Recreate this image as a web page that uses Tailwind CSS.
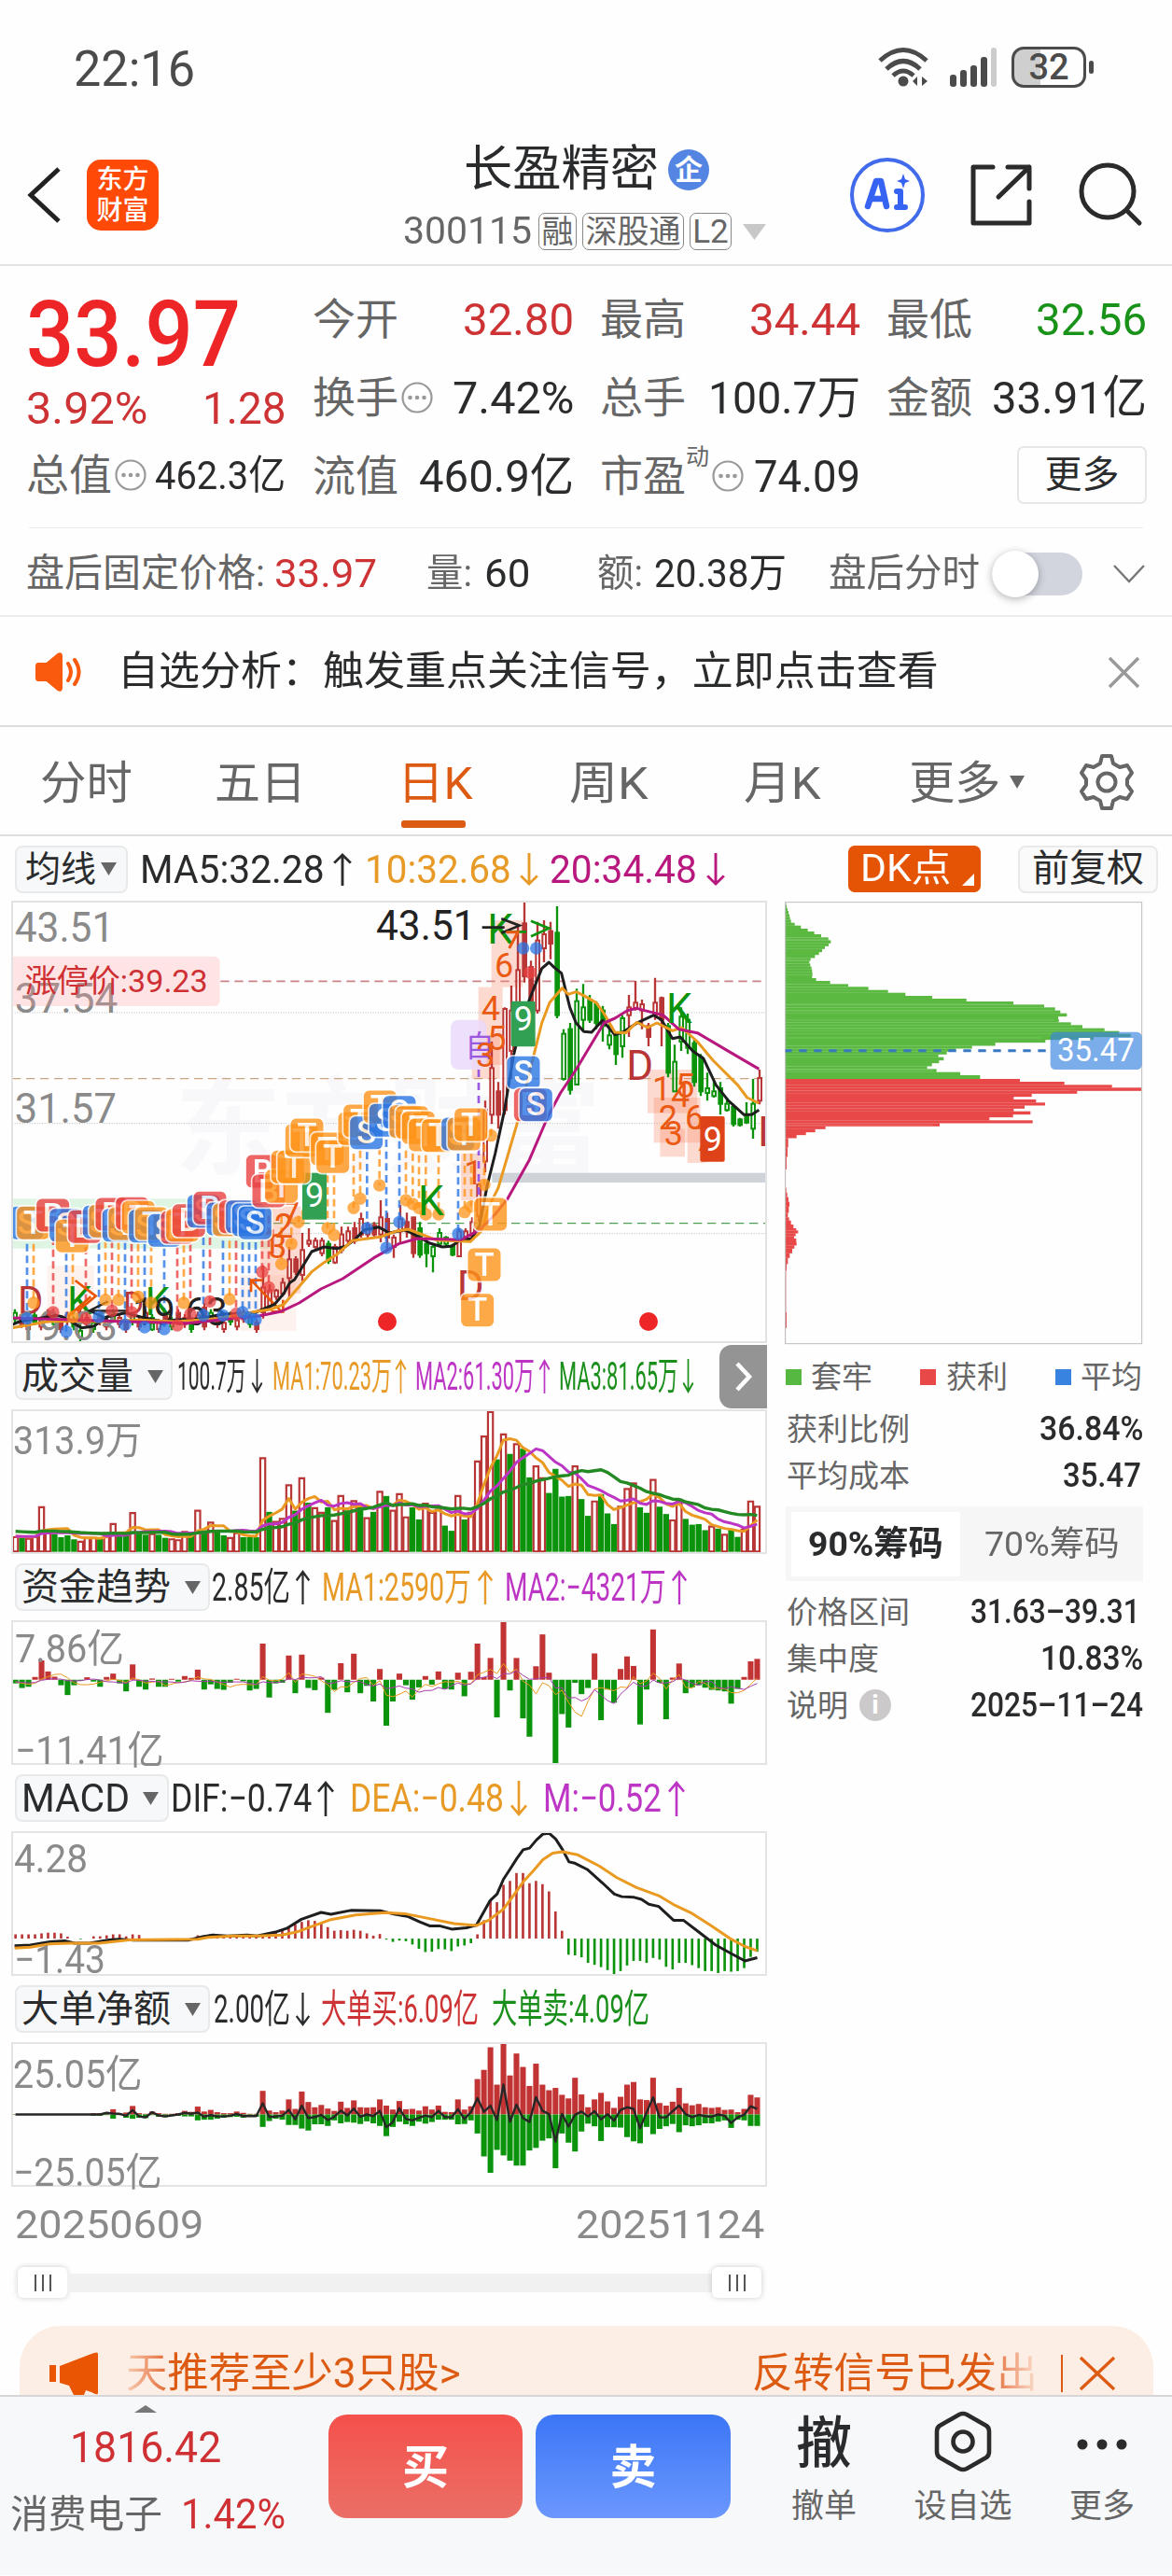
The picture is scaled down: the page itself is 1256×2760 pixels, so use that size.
<!DOCTYPE html>
<html lang="zh-CN">
<head>
  <meta charset="UTF-8">
  <title>长盈精密 300115</title>
  <script src="https://cdn.jsdelivr.net/npm/@tailwindcss/browser@4"></script>
</head>
<body class="w-[1256px] h-[2760px] overflow-hidden bg-[#fefefe] text-[#2a2b2d] font-['Roboto','Noto_Sans_CJK_SC',sans-serif] leading-none whitespace-nowrap">

  <!-- shared icons -->
  <svg class="hidden">
    <symbol id="up" viewBox="0 0 20 36" preserveAspectRatio="none"><path d="M10 36V2M2 11L10 2l8 9" fill="none" stroke="currentColor" stroke-width="2.6" /></symbol>
    <symbol id="down" viewBox="0 0 20 36" preserveAspectRatio="none"><path d="M10 0V34M2 25l8 9 8-9" fill="none" stroke="currentColor" stroke-width="2.6" /></symbol>
    <symbol id="tri" viewBox="0 0 16 14" preserveAspectRatio="none"><path d="M0 0H16L8 14z" fill="currentColor" /></symbol>
    <symbol id="more" viewBox="0 0 34 34"><circle cx="17" cy="17" r="15.5" fill="none" stroke="#999" stroke-width="2.2" /><g fill="#999"><circle cx="9.5" cy="17" r="2.3" /><circle cx="17" cy="17" r="2.3" /><circle cx="24.5" cy="17" r="2.3" /></g></symbol>
  </svg>

  <!-- status bar -->
  <div class="h-[120px] flex items-start pl-[79px] text-[#4b4b4b]">
    <span class="text-[53px] mt-[48px]" data-w="130">22:16</span>
    <svg class="ml-[731px] mt-[50px] w-[56px] h-[44px]" viewBox="0 0 56 44" fill="none" stroke="#4b4b4b" stroke-width="5">
      <path d="M3 15Q28-8 53 15" /><path d="M10 24Q28 7 46 24" /><path d="M17 31Q28 21 39 31" />
      <circle cx="28" cy="37" r="5.5" fill="#4b4b4b" stroke="none" />
      <path d="M38 37l5-5v10zM54 37l-6-5v10z" fill="#4b4b4b" stroke="none" />
    </svg>
    <svg class="ml-[20px] mt-[51px] w-[53px] h-[42px]" viewBox="0 0 53 42">
      <g fill="#4b4b4b"><rect x="2" y="29" width="7" height="13" rx="3" /><rect x="13" y="24" width="7" height="18" rx="3" /><rect x="24" y="19" width="7" height="23" rx="3" /><rect x="35" y="10" width="7" height="32" rx="3" /></g>
      <rect x="46" y="0" width="6" height="42" rx="3" fill="#ccc" />
    </svg>
    <div class="ml-[15px] mt-[50px] w-[80px] h-[44px] rounded-[13px] border-[3px] border-[#4b4b4b] bg-linear-to-r from-[#cfcfcf] from-[38%] to-transparent to-[38%] flex items-center justify-center text-[38px] font-medium">32</div>
    <div class="ml-[3px] mt-[65px] w-[5px] h-[14px] rounded-full bg-[#4b4b4b]"></div>
  </div>

  <!-- header -->
  <header class="h-[165px] border-b-2 border-[#e2e3e4] flex items-start">
    <svg class="ml-[29px] mt-[58px] w-[38px] h-[62px]" viewBox="0 0 38 62"><path d="M34 3L4 31L34 59" fill="none" stroke="#222" stroke-width="5" /></svg>
    <div class="ml-[26px] mt-[51px] w-[77px] h-[76px] rounded-[15px] bg-[#fe4a06] text-white text-[28px] font-medium flex flex-col items-center justify-center gap-[5px]"><span>东方</span><span>财富</span></div>
    <div class="ml-[262px] mt-[36px] w-[390px]">
      <div class="flex items-center pl-[65px]">
        <span class="text-[52px]" data-w="209">长盈精密</span>
        <span class="ml-[10px] size-[44px] rounded-full bg-[#5585e2] text-white text-[30px] font-bold flex items-center justify-center">企</span>
      </div>
      <div class="flex items-center mt-[19px] text-[#666] text-[40px] h-[42px]">
        <span data-w="138">300115</span>
        <span class="ml-[7px] w-[41px] h-[40px] border border-[#888] rounded-[7px] text-[34px] flex items-center justify-center">融</span>
        <span class="ml-[6px] w-[109px] h-[40px] border border-[#888] rounded-[7px] text-[34px] flex items-center justify-center">深股通</span>
        <span class="ml-[6px] w-[45px] h-[40px] border border-[#888] rounded-[7px] text-[35px] flex items-center justify-center">L2</span>
        <svg class="ml-[12px] w-[25px] h-[17px] text-[#c8c8c8]"><use href="#tri" /></svg>
      </div>
    </div>
    <svg class="ml-[88px] mt-[48px] w-[82px] h-[82px]" viewBox="0 0 82 82">
      <circle cx="41" cy="41" r="38" fill="#fff" stroke="#416bea" stroke-width="4" />
      <path d="M20 53L29 26h5l6 27M24 45h14" fill="none" stroke="#3763f2" stroke-width="6.5" stroke-linejoin="round" stroke-linecap="round" />
      <path d="M55 37v17M51 37h4M51 54h9" fill="none" stroke="#3763f2" stroke-width="6" stroke-linecap="round" />
      <path d="M58 18l2 6 5 2-5 2-2 6-2-6-5-2 5-2z" fill="#3763f2" />
    </svg>
    <svg class="ml-[46px] mt-[54px] w-[70px] h-[70px]" viewBox="0 0 70 70" fill="none" stroke="#2b2b2b" stroke-width="5" stroke-linecap="round" stroke-linejoin="round"><path d="M26 5H5V65H65V42M42 5H65V28M65 5L32 37" /></svg>
    <svg class="ml-[47px] mt-[53px] w-[70px] h-[70px]" viewBox="0 0 70 70" fill="none" stroke="#2b2b2b" stroke-width="5" stroke-linecap="round"><circle cx="32" cy="32" r="28" /><path d="M53 53L66 66" /></svg>
  </header>

  <!-- quote -->
  <section class="h-[281px] pl-[28px] pt-[29px] flex text-[46px] text-[#666]">
    <div class="w-[307px]">
      <div class="h-[96px] -mt-[3px] flex items-center font-medium text-[98px] text-[#ee2526]"><span data-w="230">33.97</span></div>
      <div class="h-[60px] flex items-center justify-between w-[279px] text-[49px] text-[#cd3335]"><span data-w="130">3.92%</span><span data-w="90">1.28</span></div>
      <div class="h-[60px] mt-[12px] flex items-center"><span>总值</span><svg class="ml-[3px] size-[34px]"><use href="#more" /></svg><span class="ml-[9px] text-[43px] text-[#2a2b2d]" data-w="140">462.3亿</span></div>
    </div>
    <div class="w-[280px]">
      <div class="h-[56px] flex items-center justify-between"><span>今开</span><span class="text-[49px] text-[#cd3335]" data-w="119">32.80</span></div>
      <div class="h-[56px] mt-[28px] flex items-center"><span>换手</span><svg class="ml-[3px] size-[34px]"><use href="#more" /></svg><span class="ml-auto text-[49px] text-[#2a2b2d]" data-w="130">7.42%</span></div>
      <div class="h-[56px] mt-[28px] flex items-center justify-between"><span>流值</span><span class="text-[49px] text-[#2a2b2d]" data-w="166">460.9亿</span></div>
    </div>
    <div class="ml-[28px] w-[279px]">
      <div class="h-[56px] flex items-center justify-between"><span>最高</span><span class="text-[49px] text-[#cd3335]" data-w="119">34.44</span></div>
      <div class="h-[56px] mt-[28px] flex items-center justify-between"><span>总手</span><span class="text-[49px] text-[#2a2b2d]" data-w="163">100.7万</span></div>
      <div class="h-[56px] mt-[28px] flex items-center"><span>市盈</span><span class="text-[25px] -mt-[42px]">动</span><svg class="ml-[3px] size-[34px]"><use href="#more" /></svg><span class="ml-auto text-[49px] text-[#2a2b2d]" data-w="114">74.09</span></div>
    </div>
    <div class="ml-[28px] w-[279px]">
      <div class="h-[56px] flex items-center justify-between"><span>最低</span><span class="text-[49px] text-[#199219]" data-w="119">32.56</span></div>
      <div class="h-[56px] mt-[28px] flex items-center justify-between"><span>金额</span><span class="text-[49px] text-[#2a2b2d]" data-w="166">33.91亿</span></div>
      <div class="mt-[24px] ml-auto w-[139px] h-[62px] rounded-[7px] border-2 border-[#e6e6e6] flex items-center justify-center text-[40px] text-[#2a2b2d]">更多</div>
    </div>
  </section>

  <!-- after-hours row -->
  <div class="h-[96px] border-b-2 border-[#ececec]">
    <div class="mx-[31px] h-px bg-[#ebebeb] -mt-px"></div>
    <div class="h-[94px] pl-[28px] pt-[3px] flex items-center text-[41px] text-[#666]">
      <span data-w="256">盘后固定价格:</span><span class="ml-[10px] text-[43px] text-[#cd3335]" data-w="110">33.97</span>
      <span class="ml-[53px]" data-w="49">量:</span><span class="ml-[13px] text-[43px] text-[#2a2b2d]" data-w="49">60</span>
      <span class="ml-[72px]" data-w="49">额:</span><span class="ml-[12px] text-[43px] text-[#2a2b2d]" data-w="142">20.38万</span>
      <span class="ml-[45px]" data-w="162">盘后分时</span>
      <span class="ml-[13px] w-[97px] h-[46px] rounded-full bg-[#d3d5de] flex items-center"><span class="size-[50px] rounded-full bg-white shadow-[0_2px_8px_rgba(0,0,0,.3)]"></span></span>
      <svg class="ml-[32px] w-[36px] h-[22px]" viewBox="0 0 36 22"><path d="M2 2L18 19L34 2" fill="none" stroke="#777" stroke-width="2.4" /></svg>
    </div>
  </div>

  <!-- notice -->
  <div class="h-[118px] border-b-2 border-[#dadcde] flex items-center pl-[37px] pt-[2px]">
    <svg class="w-[52px] h-[42px]" viewBox="0 0 52 42">
      <path d="M4 12H13L25 2q4-2 4 2V38q0 4-4 2L13 30H4q-2 0-2-3V15q0-3 2-3z" fill="#fa5a0d" stroke="#fa5a0d" stroke-width="2" stroke-linejoin="round" />
      <path d="M36 12q6 9 0 18M43 8q9 13 0 26" fill="none" stroke="#fa5a0d" stroke-width="4" stroke-linecap="round" />
    </svg>
    <span class="ml-[37px] text-[43.7px]" data-w="880">自选分析：触发重点关注信号，立即点击查看</span>
    <svg class="ml-[181px] size-[35px]" viewBox="0 0 35 35"><path d="M2 2L33 33M33 2L2 33" stroke="#999" stroke-width="3.4" /></svg>
  </div>

  <!-- period tabs -->
  <nav class="h-[117px] border-b-2 border-[#dcdedf] flex items-start pl-[43px] pt-[36px] text-[49px] text-[#666]">
    <span data-w="99">分时</span>
    <span class="ml-[88px]" data-w="98">五日</span>
    <div class="ml-[98px] text-[#dd5a12] flex flex-col"><span data-w="81">日K</span><span class="mt-[15px] ml-[4px] w-[69px] h-[8px] rounded-[3px] bg-[#dd5a12]"></span></div>
    <span class="ml-[103px]" data-w="85">周K</span>
    <span class="ml-[102px]" data-w="83">月K</span>
    <span class="ml-[95px]" data-w="98">更多</span>
    <svg class="ml-[10px] mt-[16px] w-[16px] h-[14px]"><use href="#tri" /></svg>
    <svg class="ml-[58px] -mt-[7px] size-[60px]" viewBox="0 0 60 60" fill="none" stroke="#666" stroke-width="4" stroke-linejoin="round">
      <path d="M25 2h10l2 8 7 4 8-2 5 8-5 7v6l5 7-5 8-8-2-7 4-2 8H25l-2-8-7-4-8 2-5-8 5-7v-6l-5-7 5-8 8 2 7-4z" /><circle cx="30" cy="30" r="9.5" />
    </svg>
  </nav>

  <!-- moving average row -->
  <div class="h-[69px] flex items-center pl-[16px] pt-px text-[43px]">
    <div class="w-[121px] h-[51px] rounded-[8px] border-2 border-[#e8e9ea] bg-[#f7f8f9] flex items-center pl-[9px] text-[38px]"><span>均线</span><svg class="ml-[5px] w-[17px] h-[14px] text-[#666]"><use href="#tri" /></svg></div>
    <span class="ml-[13px]" data-w="198">MA5:32.28</span><svg class="ml-[8px] w-[22px] h-[35px]"><use href="#up" /></svg>
    <div class="flex items-center text-[#e89a26]"><span class="ml-[13px]" data-w="157">10:32.68</span><svg class="ml-[9px] w-[22px] h-[35px]"><use href="#down" /></svg></div>
    <div class="flex items-center text-[#b8187e]"><span class="ml-[11px]" data-w="158">20:34.48</span><svg class="ml-[9px] w-[22px] h-[35px]"><use href="#down" /></svg></div>
    <div class="ml-[131px] w-[142px] h-[50px] rounded-[7px] bg-[#e55304] text-white flex items-center pl-[13px] text-[40px] relative"><span data-w="97">DK点</span><svg class="absolute right-[7px] bottom-[7px] w-[13px] h-[13px]" viewBox="0 0 12 12"><path d="M12 0V12H0z" fill="#fff" /></svg></div>
    <div class="ml-[40px] w-[150px] h-[51px] rounded-[8px] border-2 border-[#e8e9ea] bg-[#fafafa] flex items-center justify-center text-[40px]">前复权</div>
  </div>

  <main class="flex h-[1527px]">
    <!-- left column: charts -->
    <div class="w-[822px] pl-[12px]">
      <svg id="kline" class="block w-[810px] h-[474px] border-2 border-[#e2e2e2]" viewBox="40 53 2418 1410" preserveAspectRatio="none"></svg>

      <div class="h-[71px] flex items-center pl-[4px] text-[42px]">
        <div class="w-[169px] h-[51px] rounded-[8px] border-2 border-[#e8e9ea] bg-[#f7f8f9] flex items-center pl-[5px] text-[40px]"><span>成交量</span><svg class="ml-[15px] w-[17px] h-[14px] text-[#666]"><use href="#tri" /></svg></div>
        <span class="ml-[5px]" data-w="74">100.7万</span><svg class="ml-[5px] w-[13px] h-[37px]"><use href="#down" /></svg>
        <div class="flex items-center text-[#e89a26]"><span class="ml-[10px]" data-w="128">MA1:70.23万</span><svg class="ml-[4px] w-[13px] h-[37px]"><use href="#up" /></svg></div>
        <div class="flex items-center text-[#bd35c4]"><span class="ml-[9px]" data-w="128">MA2:61.30万</span><svg class="ml-[4px] w-[13px] h-[37px]"><use href="#up" /></svg></div>
        <div class="flex items-center text-[#1b8f1b]"><span class="ml-[9px]" data-w="128">MA3:81.65万</span><svg class="ml-[4px] w-[13px] h-[37px]"><use href="#down" /></svg></div>
        <div class="ml-auto w-[51px] h-[68px] rounded-l-[13px] bg-[#949494] flex items-center justify-center"><svg class="w-[20px] h-[32px]" viewBox="0 0 20 32"><path d="M3 2L16 16L3 30" fill="none" stroke="#fff" stroke-width="4.5" /></svg></div>
      </div>
      <div class="relative">
        <svg id="vol" class="block w-[810px] h-[155px] border-2 border-[#e4e4e4]" viewBox="25 215 1526 462" preserveAspectRatio="none"></svg>
        <span class="absolute left-[2px] top-[13px] text-[42px] text-[#8a8a8a]" data-w="139">313.9万</span>
      </div>

      <div class="h-[71px] flex items-center pl-[4px] text-[42px]">
        <div class="w-[209px] h-[51px] rounded-[8px] border-2 border-[#e8e9ea] bg-[#f7f8f9] flex items-center pl-[5px] text-[40px]"><span>资金趋势</span><svg class="ml-[15px] w-[17px] h-[14px] text-[#666]"><use href="#tri" /></svg></div>
        <span class="ml-[2px]" data-w="84">2.85亿</span><svg class="ml-[5px] w-[17px] h-[37px]"><use href="#up" /></svg>
        <div class="flex items-center text-[#e89a26]"><span class="ml-[12px]" data-w="160">MA1:2590万</span><svg class="ml-[6px] w-[18px] h-[37px]"><use href="#up" /></svg></div>
        <div class="flex items-center text-[#bd35c4]"><span class="ml-[12px]" data-w="173">MA2:−4321万</span><svg class="ml-[6px] w-[18px] h-[37px]"><use href="#up" /></svg></div>
      </div>
      <div class="relative">
        <svg id="fund" class="block w-[810px] h-[155px] border-2 border-[#e4e4e4]" viewBox="25 892 1526 460" preserveAspectRatio="none"></svg>
        <span class="absolute left-[4px] top-[10px] text-[42px] text-[#8a8a8a]" data-w="117">7.86亿</span>
        <span class="absolute left-[4px] top-[119px] text-[42px] text-[#8a8a8a]" data-w="160">−11.41亿</span>
      </div>

      <div class="h-[71px] flex items-center pl-[4px] text-[42px]">
        <div class="w-[165px] h-[51px] rounded-[8px] border-2 border-[#e8e9ea] bg-[#f7f8f9] flex items-center pl-[5px] text-[42px]"><span data-w="116">MACD</span><svg class="ml-[14px] w-[17px] h-[14px] text-[#666]"><use href="#tri" /></svg></div>
        <span class="ml-[2px]" data-w="151">DIF:−0.74</span><svg class="ml-[5px] w-[20px] h-[38px]"><use href="#up" /></svg>
        <div class="flex items-center text-[#e89a26]"><span class="ml-[16px]" data-w="165">DEA:−0.48</span><svg class="ml-[6px] w-[20px] h-[38px]"><use href="#down" /></svg></div>
        <div class="flex items-center text-[#bd35c4]"><span class="ml-[16px]" data-w="127">M:−0.52</span><svg class="ml-[6px] w-[20px] h-[38px]"><use href="#up" /></svg></div>
      </div>
      <div class="relative">
        <svg id="macd" class="block w-[810px] h-[155px] border-2 border-[#e4e4e4]" viewBox="25 234 1526 430" preserveAspectRatio="none"></svg>
        <span class="absolute left-[3px] top-[9px] text-[42px] text-[#8a8a8a]" data-w="79">4.28</span>
        <span class="absolute left-[3px] top-[117px] text-[42px] text-[#8a8a8a]" data-w="98">−1.43</span>
      </div>

      <div class="h-[71px] flex items-center pl-[4px] text-[42px]">
        <div class="w-[209px] h-[51px] rounded-[8px] border-2 border-[#e8e9ea] bg-[#f7f8f9] flex items-center pl-[5px] text-[40px]"><span>大单净额</span><svg class="ml-[15px] w-[17px] h-[14px] text-[#666]"><use href="#tri" /></svg></div>
        <span class="ml-[4px]" data-w="82">2.00亿</span><svg class="ml-[5px] w-[17px] h-[36px]"><use href="#down" /></svg>
        <span class="ml-[11px] text-[#cd3335]" data-w="169">大单买:6.09亿</span>
        <span class="ml-[14px] text-[#1b8f1b]" data-w="169">大单卖:4.09亿</span>
      </div>
      <div class="relative">
        <svg id="big" class="block w-[810px] h-[155px] border-2 border-[#e4e4e4]" viewBox="25 867 1526 430" preserveAspectRatio="none"></svg>
        <span class="absolute left-[2px] top-[14px] text-[42px] text-[#8a8a8a]" data-w="139">25.05亿</span>
        <span class="absolute left-[2px] top-[119px] text-[42px] text-[#8a8a8a]" data-w="160">−25.05亿</span>
      </div>

      <div class="mt-[19px] flex justify-between pl-[4px] pr-[3px] text-[43px] text-[#8a8a8a]"><span data-w="202">20250609</span><span data-w="202">20251124</span></div>
      <div class="mt-[24px] ml-[7px] w-[797px] h-[33px] flex items-center">
        <div class="w-[53px] h-[33px] rounded-[6px] bg-white shadow-[0_0_6px_rgba(0,0,0,.2)] flex items-center justify-center gap-[6px]"><i class="w-[2px] h-[18px] bg-[#555]"></i><i class="w-[2px] h-[18px] bg-[#555]"></i><i class="w-[2px] h-[18px] bg-[#555]"></i></div>
        <div class="flex-1 h-[20px] bg-[#f1f1f2]"></div>
        <div class="w-[53px] h-[33px] rounded-[6px] bg-white shadow-[0_0_6px_rgba(0,0,0,.2)] flex items-center justify-center gap-[6px]"><i class="w-[2px] h-[18px] bg-[#555]"></i><i class="w-[2px] h-[18px] bg-[#555]"></i><i class="w-[2px] h-[18px] bg-[#555]"></i></div>
      </div>
    </div>

    <!-- right column: chip distribution -->
    <aside class="ml-[19px] w-[384px] text-[33px] text-[#666]">
      <svg id="chips" class="block mt-px w-[384px] h-[475px]" viewBox="64 50 1152 1425"></svg>
      <div class="mt-[13px] h-[43px] flex items-center pl-px">
        <i class="size-[17px] bg-[#57b841]"></i><span class="ml-[10px]">套牢</span>
        <i class="ml-[51px] size-[17px] bg-[#e84848]"></i><span class="ml-[11px]">获利</span>
        <i class="ml-[51px] size-[17px] bg-[#3883e0]"></i><span class="ml-[10px]">平均</span>
      </div>
      <div class="mt-[9px] h-[50px] flex items-center justify-between pl-[2px]"><span>获利比例</span><span class="text-[36px] font-medium text-[#2a2b2d]" data-w="111">36.84%</span></div>
      <div class="h-[50px] flex items-center justify-between pl-[2px] pr-[2px]"><span>平均成本</span><span class="text-[36px] font-medium text-[#2a2b2d]" data-w="84">35.47</span></div>
      <div class="mt-[8px] ml-px h-[80px] bg-[#f6f6f6] flex items-center pl-[6px] text-[37px]">
        <div class="w-[181px] h-[69px] bg-white flex items-center justify-center font-bold text-[#2a2b2d]"><span data-w="145">90%筹码</span></div>
        <div class="flex-1 flex items-center justify-center"><span data-w="145">70%筹码</span></div>
      </div>
      <div class="mt-[8px] h-[50px] flex items-center justify-between pl-[2px] pr-[3px]"><span>价格区间</span><span class="text-[36px] font-medium text-[#2a2b2d]" data-w="182">31.63–39.31</span></div>
      <div class="h-[50px] flex items-center justify-between pl-[2px]"><span>集中度</span><span class="text-[36px] font-medium text-[#2a2b2d]" data-w="110">10.83%</span></div>
      <div class="h-[50px] flex items-center pl-[2px]"><span>说明</span><span class="ml-[12px] size-[34px] rounded-full bg-[#ccc9ca] text-white text-[28px] font-bold flex items-center justify-center">i</span><span class="ml-auto text-[36px] font-medium text-[#2a2b2d]" data-w="185">2025–11–24</span></div>
    </aside>
  </main>

  <!-- promo banner, cut off by the bottom bar -->
  <div class="ml-[21px] w-[1215px] h-[74px] overflow-hidden rounded-t-[44px] bg-[#fceee4] text-[#dd5a12] text-[44px] flex items-center pt-[27px] pl-[32px]">
    <svg class="w-[53px] h-[46px]" viewBox="0 0 53 46" fill="#ea5504"><path d="M0 14h7v18H0zM11 15L45 2q7-3 7 0V44q0 3-7-1l-6-2-2 5H26l-5-10-10-3z" /></svg>
    <span class="ml-[29px] bg-linear-to-r from-[#f6ccb2] to-[#dd5a12] to-[14%] bg-clip-text text-transparent py-[4px]" data-w="359">天推荐至少3只股&gt;</span>
    <span class="ml-[312px] bg-linear-to-r from-[#dd5a12] from-[82%] to-[#fadfce] bg-clip-text text-transparent py-[4px]" data-w="306">反转信号已发出</span>
    <i class="ml-[25px] w-[2px] h-[40px] bg-[#dd5a12]"></i>
    <svg class="ml-[17px] w-[40px] h-[38px]" viewBox="0 0 40 38"><path d="M2 2L38 36M38 2L2 36" stroke="#dd5a12" stroke-width="3.4" /></svg>
  </div>

  <!-- bottom bar -->
  <footer class="h-[193px] border-t-2 border-[#d6d6d8] bg-[#f7f8fa] flex items-start">
    <div class="w-[312px] flex flex-col items-center text-[#cf3033]">
      <svg class="mt-[9px] w-[24px] h-[8px] rotate-180 text-[#777]"><use href="#tri" /></svg>
      <span class="mt-[14px] text-[46px]" data-w="162">1816.42</span>
      <div class="mt-[27px] flex items-center self-start pl-[11px] text-[41px]"><span class="text-[#666]" data-w="163">消费电子</span><span class="ml-[20px] text-[44px]" data-w="112">1.42%</span></div>
    </div>
    <div class="ml-[40px] mt-[19px] w-[208px] h-[111px] rounded-[20px] bg-linear-to-b from-[#f5504b] to-[#ea6e66] flex items-center justify-center text-white font-bold text-[50px] pt-[3px]">买</div>
    <div class="ml-[14px] mt-[19px] w-[209px] h-[111px] rounded-[20px] bg-linear-to-b from-[#3b76f6] to-[#6b97fd] flex items-center justify-center text-white font-bold text-[50px] pt-[3px]">卖</div>
    <div class="ml-[45px] w-[110px] flex flex-col items-center"><span class="mt-[21px] text-[60px] font-medium">撤</span><span class="mt-[19px] text-[35px] text-[#666]">撤单</span></div>
    <div class="ml-[39px] w-[110px] flex flex-col items-center">
      <svg class="mt-[15px] w-[62px] h-[66px]" viewBox="0 0 62 66" fill="none" stroke="#2b2b2b" stroke-width="4.6" stroke-linejoin="round"><path d="M27 4q4-2 8 0L56 16q3 2 3 6V44q0 4-3 6L35 62q-4 2-8 0L6 50q-3-2-3-6V22q0-4 3-6z" /><circle cx="31" cy="33" r="10.5" /></svg>
      <span class="mt-[19px] text-[35px] text-[#666]">设自选</span>
    </div>
    <div class="ml-[39px] w-[110px] flex flex-col items-center">
      <svg class="mt-[44px] w-[54px] h-[14px]" viewBox="0 0 54 14" fill="#2b2b2b"><circle cx="6" cy="7" r="5.5" /><circle cx="27" cy="7" r="5.5" /><circle cx="48" cy="7" r="5.5" /></svg>
      <span class="mt-[42px] text-[35px] text-[#666]">更多</span>
    </div>
  </footer>

  <script>
    const RED = '#b93636', GREEN = '#0c930c', ORANGE = '#ea9a20', PURPLE = '#bd35c4';
    const el = id => document.getElementById(id);
    const line = (pts, color, w) => `<polyline points="${pts}" fill="none" stroke="${color}" stroke-width="${w}" stroke-linejoin="round" vector-effect="non-scaling-stroke" />`;

    // squeeze a label into a fixed width, again whenever its own width changes
    function fit(n) {
      const w = +n.dataset.w, natural = n.offsetWidth;
      if (!natural) return;
      n.style.transform = `scaleX(${w / natural})`;
      n.style.marginRight = `${w - natural}px`;
    }
    const resize = new ResizeObserver(list => list.forEach(e => fit(e.target)));
    document.querySelectorAll('[data-w]').forEach(n => {
      n.style.display = 'inline-block';
      n.style.flex = 'none';
      n.style.width = 'max-content';
      n.style.transformOrigin = '0 50%';
      resize.observe(n);
    });
    addEventListener('load', () => document.querySelectorAll('[data-w]').forEach(fit));

    const X = i => 30 + 13.2 * i;
    function average(data, n, pad) {
      return data.map((v, i) => {
        let s = 0;
        for (let k = i - n + 1; k <= i; k++) s += k < 0 ? pad : data[k];
        return `${X(i)},${(s / n).toFixed(1)}`;
      }).join(' ');
    }

    // volume
    const vol = 'r625 g630 r630 r625 r527 r605 g618 g628 g622 g635 r640 r628 r628 g628 r612 r582 g618 g622 r546 g615 g620 r615 g620 g630 r632 r635 r608 g622 r538 g605 r577 g612 g622 r628 r612 g628 g628 g628 r366 g545 r575 r565 r455 g541 r432 g515 r530 r545 g530 r572 r490 g540 r507 g520 r563 g545 r476 g493 r538 r484 r560 g530 g570 r515 r545 r535 g590 g607 r490 g570 r545 r377 r295 r215 g373 r288 g355 r320 g338 g432 r393 r432 g483 g404 g495 g493 r393 g503 g558 r508 g487 g550 g585 r525 r467 r449 g530 g548 r437 g528 g552 r570 r502 g568 g587 g585 g605 r590 g600 r617 g600 g627 r600 r508 r525'.split(' ');
    const volY = vol.map(v => +v.slice(1));
    el('vol').innerHTML = vol.map((v, i) => v[0] === 'g'
      ? `<rect x="${X(i) - 6}" y="${volY[i]}" width="12" height="${676 - volY[i]}" fill="${GREEN}" />`
      : `<rect x="${X(i) - 5}" y="${volY[i] + 3}" width="10" height="${672 - volY[i]}" fill="#fff" stroke="${RED}" stroke-width="2.2" vector-effect="non-scaling-stroke" />`
    ).join('') + line(average(volY, 5, 625), ORANGE, 3) + line(average(volY, 10, 625), PURPLE, 3) + line(average(volY, 20, 608), '#238a23', 3.4);

    // capital trend
    const fund = [1092,1107,1103,1071,1017,1053,1070,1098,1130,1098,1084,1072,1086,1103,1071,1060,1092,1118,1030,1103,1112,1076,1103,1103,1077,1086,1068,1074,1047,1112,1095,1110,1113,1090,1077,1085,1115,1110,962,1138,1092,1090,1001,1124,998,1107,1114,1073,1188,1113,1026,1121,995,1124,1100,1151,1045,1230,1151,1060,1098,1145,1105,1068,1096,1053,1110,1112,1057,1134,1054,962,1072,1009,1203,891,1115,1009,1206,1266,1036,932,1057,1353,1192,1236,1090,1127,1107,994,1212,1112,1155,1045,1004,1035,1226,1112,916,1090,1209,1073,1027,1124,1105,1098,1106,1113,1115,1118,1158,1110,1071,1020,1012];
    const bar = (i, a, b, c, w) => `<rect x="${X(i) - w / 2}" y="${Math.min(a, b)}" width="${w}" height="${Math.abs(a - b)}" fill="${c}" />`;
    el('fund').innerHTML = fund.map((v, i) => bar(i, 1080, v, v < 1080 ? '#c23434' : GREEN, 11.5)).join('')
      + line(average(fund, 5, 1086), ORANGE, 1) + line(average(fund, 10, 1086), '#a83cae', 1);

    // MACD
    const macd = [543,543,543,543,540,538,538,540,550,556,558,556,549,549,546,543,543,549,543,545,556,556,556,556,556,556,556,556,546,546,542,545,546,547,547,546,548,549,545,540,536,530,520,513,505,500,502,508,521,532,530,532,529,532,540,547,542,559,566,562,564,574,587,597,596,588,589,594,580,577,570,543,500,440,445,392,380,356,356,387,380,390,412,473,532,605,607,613,630,636,643,652,665,655,638,624,624,630,615,620,642,650,630,630,637,646,655,655,661,655,657,655,646,612,596];
    el('macd').innerHTML = macd.map((v, i) => bar(i, 556, v, v < 556 ? RED : GREEN, 5)).join('')
      + line('28,578 60,576 100,566 130,563 150,570 180,570 220,560 240,558 270,561 340,561 380,561 410,550 430,545 460,548 500,545 520,548 560,535 580,525 610,497 650,476 670,482 710,470 770,471 800,482 825,488 850,505 870,517 890,517 915,527 945,523 965,515 993,440 1007,420 1020,375 1033,345 1047,312 1060,285 1073,280 1087,255 1100,237 1113,235 1126,252 1140,285 1153,322 1165,326 1190,345 1220,385 1245,420 1260,428 1285,430 1300,436 1315,451 1335,458 1365,500 1385,500 1420,540 1450,575 1480,600 1510,624 1535,614', '#1e1e1e', 3)
      + line('28,585 60,582 100,572 140,570 200,570 260,560 400,558 420,552 470,548 520,548 570,545 600,536 640,514 670,498 720,484 780,477 820,480 860,492 920,510 965,516 990,500 1020,466 1040,425 1060,383 1080,350 1100,315 1120,295 1140,291 1170,300 1215,335 1250,370 1290,400 1335,425 1365,452 1400,477 1440,515 1480,556 1510,580 1535,593', ORANGE, 3);

    // big orders: buy above the axis, sell below
    const buy = [1081,1081,1081,1081,1081,1081,1081,1081,1081,1081,1081,1081,1078,1078,1075,1066,1078,1076,1056,1078,1080,1073,1078,1080,1080,1078,1071,1074,1058,1073,1068,1075,1078,1078,1073,1077,1080,1080,1010,1070,1075,1070,1036,1065,1012,1044,1060,1053,1064,1071,1043,1062,1039,1060,1061,1060,1036,1055,1067,1041,1066,1065,1070,1057,1067,1055,1074,1075,1036,1067,1057,974,946,877,991,866,963,896,937,995,927,991,1008,1001,1022,1033,970,1021,1060,1036,1016,1042,1062,1028,991,983,1036,1038,970,1047,1055,1043,1001,1048,1054,1050,1060,1062,1060,1068,1067,1075,1065,1022,1030];
    const sell = [1083,1083,1083,1083,1083,1083,1083,1083,1083,1083,1083,1083,1086,1086,1084,1095,1084,1092,1095,1092,1093,1084,1089,1090,1087,1086,1088,1088,1100,1098,1098,1095,1092,1090,1089,1092,1089,1089,1120,1102,1095,1098,1114,1114,1125,1131,1112,1112,1117,1100,1109,1105,1107,1111,1103,1109,1117,1148,1120,1104,1112,1117,1104,1110,1105,1098,1098,1098,1112,1111,1100,1140,1210,1260,1190,1207,1223,1238,1238,1192,1184,1162,1155,1246,1140,1168,1195,1134,1110,1118,1163,1121,1121,1122,1151,1164,1170,1120,1142,1126,1118,1111,1136,1115,1118,1115,1109,1109,1104,1100,1123,1098,1100,1117,1117];
    el('big').innerHTML = buy.map((v, i) => bar(i, 1082, v, '#c23434', 11.5) + bar(i, 1082, sell[i], GREEN, 11.5)).join('')
      + line(buy.map((v, i) => `${X(i)},${v + sell[i] - 1082}`).join(' '), '#262626', 2.4);

    // chip distribution, one step per price level
    const chips = [[52,68],[61,70],[71,73],[80,76],[90,79],[99,81],[108,84],[118,96],[127,116],[137,138],[146,159],[155,181],[165,204],[174,212],[184,205],[193,193],[202,184],[212,174],[221,161],[231,147],[240,143],[249,146],[259,150],[268,152],[277,153],[287,152],[296,165],[305,210],[315,268],[324,333],[334,396],[343,452],[353,538],[362,648],[371,799],[381,898],[390,933],[400,950],[409,971],[419,943],[428,945],[438,984],[447,1021],[457,1092],[466,1139],[475,1176],[485,1057],[494,902],[503,741],[513,666],[522,614],[532,585],[541,558],[550,575],[560,560],[569,537],[579,522],[588,552],[598,628],[608,692],[620,820],[629,963],[639,1116],[648,1211],[658,1004],[667,858],[677,800],[686,872],[696,901],[705,835],[715,800],[724,854],[734,798],[743,722],[753,861],[762,562],[772,195],[781,162],[791,132],[800,102],[810,75],[840,73],[870,70],[910,67],[960,67],[970,69],[985,72],[1000,76],[1015,79],[1030,77],[1050,74],[1065,78],[1075,84],[1088,92],[1100,101],[1107,107],[1116,99],[1125,94],[1133,101],[1145,102],[1155,95],[1165,88],[1180,80],[1195,74],[1215,70],[1235,68],[1370,70],[1420,67],[1470,66]];
    el('chips').innerHTML = chips.slice(0, -1).map(([y, x], i) =>
      `<rect x="66" y="${y}" width="${x - 66}" height="${chips[i + 1][0] - y + .5}" fill="${y < 615 ? '#5bb942' : '#e84848'}" />`).join('')
      + [[172, 200], [238, 140], [285, 150], [325, 320], [380, 780], [401, 930], [431, 930], [458, 1000], [488, 890], [592, 540]].map(([y, x]) => `<path d="M66 ${y}H${x}" stroke="#7cc966" stroke-width="2" />`).join('')
      + [[658, 980], [715, 790], [768, 540]].map(([y, x]) => `<path d="M66 ${y}H${x}" stroke="#ef7a7a" stroke-width="2" />`).join('')
      + `<rect x="66" y="52" width="1146" height="1419" fill="none" stroke="#bdbdbd" stroke-width="3" />
        <path d="M66 529H905" stroke="#3a78c4" stroke-width="9" stroke-dasharray="25 23" stroke-dashoffset="4" />
        <rect x="918" y="469" width="294" height="121" rx="16" fill="#3883e0" fill-opacity=".66" />
        <text x="940" y="564" font-size="105" fill="#fff" textLength="248" lengthAdjust="spacingAndGlyphs">35.47</text>`;

    // ---- daily K chart ----
    const text = (x, y, s, size, color, w, extra = '') => `<text x="${x}" y="${y}" font-size="${size}" fill="${color}" ${w ? `textLength="${w}" lengthAdjust="spacingAndGlyphs"` : ''} ${extra}>${s}</text>`;
    const box = (x, y, w, h, c, o = 1) => `<rect x="${x}" y="${y}" width="${w}" height="${h}" fill="${c}" fill-opacity="${o}" />`;
    const tone = { S: '#2a76e4', T: '#ff941a', B: '#ea4242' };
    let k = '';

    k += text(560, 900, '东方财富', 340, '#f8f8fa', 1370, 'font-weight="700"');
    k += `<rect x="37" y="1005" width="840" height="160" fill="#dff5e4" />`;
    k += `<path d="M37 407H2463M37 763H2463M37 1117H2463" stroke="#bbb" stroke-width="3" stroke-dasharray="3 5" />
      <path d="M707 306H2463" stroke="#c98388" stroke-width="5" stroke-dasharray="28 17" />
      <path d="M37 619H2463" stroke="#c9a583" stroke-width="4" stroke-dasharray="28 17" />
      <path d="M877 1084H2463" stroke="#4f9f55" stroke-width="4" stroke-dasharray="28 17" />`;
    k += box(1580, 922, 883, 31, '#ced2d9');
    k += text(45, 180, '43.51', 131, '#8a8a8a', 320) + text(45, 407, '37.54', 131, '#8a8a8a', 332) + text(45, 762, '31.57', 131, '#8a8a8a', 328);
    k += `<rect x="20" y="226" width="685" height="160" rx="18" fill="#ff9ea4" fill-opacity=".27" />`;
    k += text(78, 342, '涨停价:39.23', 102, '#cf3033', 588);
    k += text(1207, 174, '43.51', 131, '#222', 320);

    // pink count backgrounds
    [[150,1220,150,160],[835,1030,130,280],[770,1250,180,180],[1536,325,78,250],[1515,480,90,140],[1578,110,100,215],[1480,860,80,150],[2080,590,160,140],[2100,680,150,145],[2120,780,80,90],[2208,740,60,150]]
      .forEach(b => k += box(...b, '#fb8762', b[0] < 200 || b[1] > 1200 ? .1 : .3));

    // candles: index, high, low, body top, body bottom, r/g, solid
    const candles = [
      [38,1220,1390,1290,1370,'r'],[39,1280,1360,1300,1350,'r'],[40,1295,1330,1300,1320,'r'],[41,1260,1320,1275,1310,'r'],[42,1160,1325,1200,1260,'r'],[43,1190,1250,1200,1240,'r',1],[44,1115,1270,1170,1250,'r'],[45,1100,1160,1140,1150,'r'],[46,1130,1165,1140,1160,'r'],[47,1130,1190,1140,1180,'r'],[48,1140,1215,1150,1205,'g',1],[49,1150,1215,1160,1210,'r'],[50,1095,1180,1120,1170,'r'],[51,1095,1150,1110,1140,'r'],[52,1080,1150,1100,1140,'r',1],[53,1050,1130,1070,1120,'r'],[54,1080,1130,1090,1120,'r'],[55,1080,1130,1090,1120,'r',1],[56,1010,1145,1065,1120,'r'],[57,1050,1170,1070,1130,'r',1],[58,1120,1195,1130,1160,'r'],[59,1025,1150,1070,1110,'r'],[60,1050,1130,1080,1110,'r',1],[61,1065,1195,1065,1180,'r',1],[62,1080,1195,1100,1185,'g',1],[63,1130,1225,1150,1180,'g',1],[64,1155,1242,1160,1190,'g'],[65,1100,1155,1115,1150,'g'],[66,1125,1160,1130,1150,'g'],[67,1150,1190,1155,1185,'g',1],[68,1100,1192,1110,1190,'r'],[69,1100,1135,1110,1130,'r'],[70,1065,1130,1080,1125,'r'],[71,955,1080,960,1060,'r'],
      [72,690,920,720,885,'r'],[73,500,765,585,735,'r'],[74,630,780,660,735,'r',1],[75,390,735,395,720,'r'],[76,320,620,400,530,'r'],[77,130,500,270,380,'r'],[78,50,310,120,290,'r',1],[79,240,430,260,400,'r',1],[80,115,410,175,400,'r'],[81,110,245,155,200,'r'],[82,115,235,145,185,'r',1],[83,65,425,150,415,'g',1],[84,460,625,475,620,'g'],[85,440,670,460,655,'g',1],[86,330,640,370,638,'g'],[87,315,465,390,430,'g'],[88,350,440,365,430,'g',1],[89,370,460,380,440,'g',1],[90,385,500,400,450,'g',1],[91,430,525,480,510,'g'],[92,470,575,480,540,'g',1],[93,415,552,425,515,'g'],[94,350,485,390,415,'r'],[95,305,400,375,395,'r'],[96,365,460,380,400,'r'],[97,440,515,450,485,'r',1],[98,295,430,375,415,'r'],[99,355,515,360,430,'r',1],[100,440,615,450,600,'g',1],[101,510,660,565,660,'g'],[102,390,530,420,500,'g'],[103,410,540,430,520,'g'],[104,495,645,505,630,'g',1],[105,540,675,550,660,'g',1],[106,600,690,650,665,'g'],[107,625,680,660,675,'g'],[108,630,735,650,700,'g',1],[109,680,725,700,720,'g'],[110,700,773,710,765,'g',1],[111,745,773,750,768,'g',1],[112,695,765,735,760,'g',1],[113,620,812,700,780,'g'],[114,590,702,617,690,'r']];
    for (let i = 0; i < 38; i++) {
      const y = 1378 + (i * 7 % 5) * 8;
      candles.push([i, y - 18, y + 26, y - 6, y + 14, i % 3 ? 'r' : 'g', i % 2]);
    }
    candles.push([10,1390,1470,1430,1450,'g'],[21,1380,1430,1405,1425,'g'],[29,1340,1390,1355,1380,'r',1]);
    candles.forEach(([i, hi, lo, a, b, c, solid]) => {
      const x = 46 + 21 * i, col = c === 'r' ? RED : GREEN;
      k += `<path d="M${x} ${hi}V${a}M${x} ${b}V${lo}" stroke="${col}" stroke-width="7" />`
        + `<rect x="${x - 5}" y="${a}" width="11" height="${b - a}" fill="${solid ? col : '#fff'}" fill-opacity="${solid ? 1 : .6}" stroke="${col}" stroke-width="6" />`;
    });

    // guide lines down to the trade dots: x, top, dot y, kind
    const dots = [[85,1150,1390,'S'],[106,1150,1340,'T'],[169,1130,1370,'B'],[211,1180,1432,'S'],[232,1180,1385,'T'],[274,1160,1390,'B'],[316,1145,1385,'S'],[337,1140,1330,'T'],[358,1140,1365,'B'],[379,1145,1330,'T'],[400,1145,1410,'S'],[421,1150,1370,'B'],[442,1150,1320,'T'],[463,1150,1418,'S'],[484,1150,1340,'T'],[526,1165,1424,'S'],[568,1160,1412,'B'],[589,1155,1340,'T'],[610,1150,1375,'B'],[652,1130,1380,'S'],[673,1130,1335,'B'],[715,1140,1380,'S'],[736,1140,1328,'T'],[757,1140,1375,'B'],[778,1145,1370,'S'],[799,1145,1388,'S'],[820,1145,1394,'S'],[841,1060,1240,'B'],[862,1060,1290,'B'],[903,1060,1215,'T'],[935,1060,1150,'T'],[958,1060,1080,'T'],[985,1030,1052,'T'],[1051,930,1100,'T'],[1072,930,1122,'T'],[1135,860,1035,'T'],[1156,850,1005,'T'],[1178,855,1100,'S'],[1218,840,962,'T'],[1240,815,1163,'S'],[1282,820,1080,'S'],[1303,850,1010,'T'],[1325,860,1022,'T'],[1345,865,1035,'T'],[1367,865,1055,'T'],[1408,865,1055,'T'],[1471,860,1118,'S'],[1492,860,1048,'T'],[1513,860,1030,'T'],[1577,780,802,'T'],[1555,830,960,'T'],[1680,340,200,'S'],[1722,440,200,'S'],[1702,430,278,'B']];
    dots.forEach(([x, a, b, t]) => {
      if (b > a) k += `<path d="M${x} ${a}V${b}" stroke="${tone[t]}" stroke-opacity=".8" stroke-width="8" stroke-dasharray="24 14" />`;
    });

    k += text(215, 1375, 'K', 125, GREEN) + text(55, 1375, 'D', 125, RED) + text(395, 1375, 'D', 100, RED) + text(465, 1378, 'K', 125, GREEN);
    k += text(48, 1460, '19.63', 131, '#8a8a8a', 328);
    k += `<path d="M345 1335L285 1365L345 1392M285 1365H410" fill="none" stroke="#222" stroke-width="7" />` + text(425, 1412, '19.63', 125, '#222', 304);
    k += `<path d="M240 1268l66 50-60 50M220 1380l70-60M805 1305v-38h38M808 1270l95 98M870 1368h38v-38" fill="none" stroke="#ea5504" stroke-width="8" />`;

    k += line('37,1410 60,1400 120,1390 180,1380 200,1385 260,1420 300,1415 340,1385 400,1372 450,1385 520,1400 560,1395 640,1390 720,1375 770,1375 820,1370 880,1345 910,1310 930,1275 945,1265 1000,1175 1040,1160 1080,1165 1110,1158 1140,1135 1170,1105 1215,1096 1250,1115 1300,1105 1330,1120 1380,1148 1420,1160 1450,1158 1475,1140 1515,1133 1540,1090 1565,960 1590,860 1620,720 1650,540 1680,420 1700,365 1740,265 1763,245 1780,262 1803,280 1830,390 1850,440 1875,468 1900,470 1935,432 1975,478 2000,470 2050,438 2100,415 2125,430 2160,490 2185,485 2225,530 2260,555 2300,640 2340,690 2390,735 2415,735 2438,720', '#1e1e1e', 3);
    k += line('37,1420 150,1400 250,1398 320,1400 450,1395 560,1400 700,1390 820,1368 870,1360 910,1345 1000,1240 1040,1210 1080,1185 1130,1140 1220,1128 1270,1110 1310,1103 1350,1118 1400,1138 1510,1143 1545,1110 1570,1030 1600,970 1660,765 1700,600 1740,440 1765,375 1805,328 1825,348 1850,340 1880,355 1915,375 1940,410 1975,470 2010,472 2045,438 2080,455 2110,440 2160,465 2190,455 2240,500 2290,560 2370,640 2400,680 2438,698', ORANGE, 3);
    k += line('37,1388 200,1393 400,1400 600,1405 700,1395 830,1382 900,1368 960,1340 1030,1295 1100,1262 1200,1195 1280,1150 1340,1133 1480,1137 1540,1105 1590,1055 1630,1005 1700,880 1760,740 1800,665 1850,590 1940,440 1975,425 2015,400 2045,393 2070,400 2130,415 2180,460 2240,472 2330,525 2438,588', '#b8187e', 3);

    dots.forEach(([x, a, b, t]) => k += `<circle cx="${x}" cy="${b}" r="20" fill="${tone[t]}" fill-opacity=".75" />`);

    // signal letters and counts
    k += text(1342, 1058, 'K', 132, GREEN) + text(2140, 440, 'K', 132, GREEN) + text(1565, 184, 'K', 132, GREEN) + text(1467, 1330, 'D', 132, RED) + text(2012, 624, 'D', 132, RED) + text(2435, 837, 'D', 132, RED);
    k += `<path d="M1548 133H1620M1610 105l58 22-58 24" fill="none" stroke="#222" stroke-width="8" /><path d="M1630 147H1690M1705 112l58 24-58 26" fill="none" stroke="${GREEN}" stroke-width="8" />`;
    k += `<rect x="1447" y="430" width="115" height="160" rx="25" fill="#e9d8fb" fill-opacity=".8" />` + text(1493, 548, '自', 95, '#9a58e0') + `<path d="M1537 590V1000" stroke="#9a58e0" stroke-width="8" stroke-dasharray="24 18" />`;
    [['4',1545,430],['5',1565,528],['3',1528,582],['6',1588,294],['1',1490,960],['1',2095,690],['5',2170,680],['4',2155,710],['2',2115,782],['6',2200,782],['3',2133,832],['7',2230,850],['3',860,1195],['2',880,1130],['1',840,1180],['7',900,1095]]
      .forEach(([s, x, y]) => k += text(x, y, s, 108, '#ea5a14'));
    k += `<path d="M1625 148h38L1635 200" fill="none" stroke="#ea5a14" stroke-width="9" />`;
    k += box(970, 922, 78, 150, '#31a053') + text(979, 1032, '9', 108, '#fff');
    k += `<rect x="1641" y="370" width="78" height="146" rx="6" fill="#31a053" />` + text(1650, 465, '9', 108, '#fff');
    k += `<rect x="2249" y="740" width="79" height="146" rx="6" fill="#de4218" />` + text(2259, 850, '9', 108, '#fff');

    // trade badges
    [['S',30,1028],['T',50,1028],['B',113,1003],['S',155,1035],['T',175,1070],['B',215,1040],['S',262,1025],['T',282,1022],['B',303,1000],['S',325,1035],['T',345,1030],['B',368,998],['T',388,1010],['S',410,1038],['T',430,1030],['S',472,1052],['B',513,1042],['T',530,1035],['B',550,1020],['S',598,990],['B',618,980],['S',660,1015],['T',680,1018],['B',700,1008],['S',722,1008],['S',742,1018],['S',763,1028],
     ['B',787,862],['B',807,925],['T',848,910],['T',868,848],['T',888,848],['T',913,763],['T',930,745],['T',995,790],['T',1013,815],['T',1083,725],['T',1100,700],['S',1121,738],['T',1165,655],['S',1183,698],['S',1227,672],['T',1248,702],['T',1268,705],['T',1288,722],['T',1310,745],['T',1352,747],['S',1415,742],['T',1435,742],['T',1457,712],
     ['S',1626,545],['B',1648,648],['S',1666,648],['T',1520,1000],['T',1500,1162],['T',1478,1308]]
      .forEach(([s, x, y]) => {
        k += `<g opacity=".8"><rect x="${x}" y="${y}" width="110" height="110" rx="20" fill="${tone[s]}" stroke="#fff" stroke-width="5" />`
          + `<text x="${x + 55}" y="${y + 90}" font-size="104" font-weight="500" fill="#fff" text-anchor="middle">${s}</text></g>`;
      });

    // report days
    k += `<circle cx="1243" cy="1400" r="30" fill="#ee2526" /><circle cx="2083" cy="1400" r="30" fill="#ee2526" />`;
    el('kline').innerHTML = k;
  </script>
</body>
</html>
